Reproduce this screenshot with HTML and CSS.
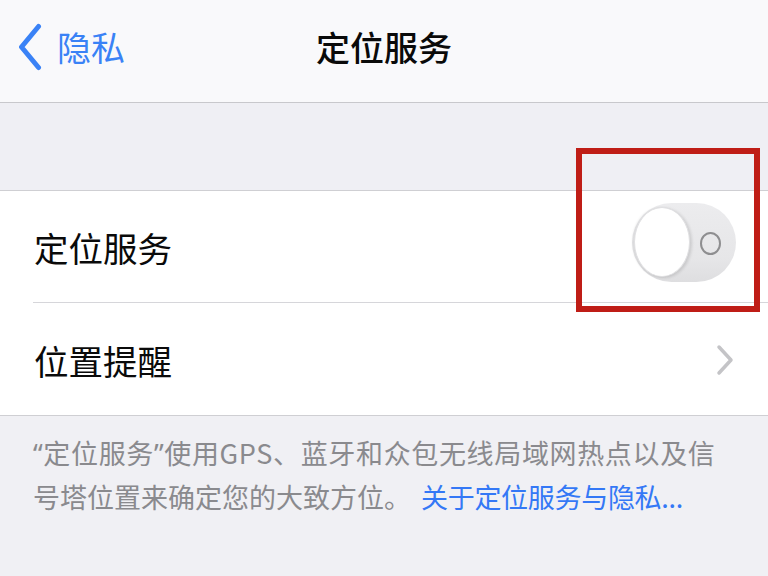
FILE: index.html
```html
<!DOCTYPE html>
<html lang="zh-CN">
<head>
<meta charset="utf-8">
<title>定位服务</title>
<link rel="stylesheet" href="styles.css">
</head>
<body>
<div class="screen">
  <header class="nav">
    <div class="nav-back">
      <svg class="back-chevron" width="26" height="48" viewBox="0 0 26 48"><polyline points="21.5,3.5 4.5,24 21.5,44.5" fill="none" stroke="#3a82f6" stroke-width="5" stroke-linecap="round" stroke-linejoin="round"/></svg>
      <span class="back-label">隐私</span>
    </div>
    <h1 class="nav-title">定位服务</h1>
    <div class="nav-spacer"></div>
  </header>
  <div class="gap"></div>
  <section class="group">
    <div class="row">
      <span class="row-label">定位服务</span>
      <div class="toggle">
        <div class="toggle-ring"></div>
        <div class="toggle-knob"></div>
      </div>
    </div>
    <div class="row row-last">
      <span class="row-label">位置提醒</span>
      <svg class="row-chevron" width="18" height="32" viewBox="0 0 18 32"><polyline points="3,3 15,16 3,29" fill="none" stroke="#c4c4c7" stroke-width="3.5" stroke-linecap="round" stroke-linejoin="round"/></svg>
    </div>
  </section>
  <div class="footer">
    <div class="footer-line footer-first"><span class="q">“</span>定位服务<span class="q">”</span>使用GPS、蓝牙和众包无线局域网热点以及信</div>
    <div class="footer-line footer-second"><span>号塔位置来确定您的大致方位。</span><span class="link">关于定位服务与隐私...</span></div>
  </div>
  <div class="highlight"></div>
</div>
</body>
</html>
```
FILE: styles.css
```css
* { box-sizing: border-box; }
html, body {
  margin: 0;
  padding: 0;
  background: #efeff4;
}
body {
  font-family: "Noto Sans CJK SC", "Noto Sans", sans-serif;
}
.screen {
  position: relative;
  width: 768px;
  height: 576px;
  overflow: hidden;
  background: #f0f0f4;
}
.nav {
  height: 103px;
  background: #f9f9fb;
  border-bottom: 1px solid #c8c8cc;
  display: grid;
  grid-template-columns: 1fr auto 1fr;
  align-items: center;
  padding-bottom: 9px;
}
.nav-back {
  display: flex;
  align-items: center;
  padding-left: 17px;
  gap: 14px;
}
.back-label {
  font-size: 34px;
  line-height: 1;
  color: #3a82f6;
}
.nav-title {
  margin: 0;
  font-size: 34px;
  font-weight: 500;
  line-height: 1;
  color: #0a0a0a;
}
.gap {
  height: 87px;
  background: #efeff4;
}
.group {
  background: #fff;
  border-top: 1px solid #cfcfd3;
  border-bottom: 1px solid #cfcfd3;
}
.row {
  height: 112px;
  display: flex;
  align-items: center;
  justify-content: space-between;
  margin-left: 33px;
  padding-right: 32px;
  border-bottom: 1px solid #d6d6da;
}
.row-last {
  border-bottom: none;
  padding-right: 34px;
}
.row-label {
  font-size: 34.5px;
  line-height: 1;
  color: #0a0a0a;
  padding-top: 2px;
  padding-left: 1px;
}
.row-chevron {
  margin-top: 2px;
}
.toggle {
  position: relative;
  width: 104px;
  height: 79px;
  border-radius: 40px / 40px;
  background: linear-gradient(180deg, #ececee 0%, #e6e6e8 70%, #dedee0 100%);
  margin-top: -8px;
}
.toggle-knob {
  position: absolute;
  left: 2px;
  top: 4px;
  width: 56px;
  height: 70px;
  border-radius: 50%;
  background: #fff;
  border: 1px solid #e0e0e2;
  box-shadow: -2px 0 2px rgba(0,0,0,0.06), 2px 1px 3px rgba(0,0,0,0.12);
}
.toggle-ring {
  position: absolute;
  left: 68px;
  top: 29px;
  width: 21px;
  height: 23px;
  border-radius: 50%;
  border: 2px solid #8e8e90;
}
.footer {
  padding: 15px 20px 0 33px;
  font-size: 27px;
  line-height: 43px;
  color: #8a8a8e;
}
.footer-line {
  white-space: nowrap;
}
.footer-first {
  letter-spacing: 0.65px;
}
.footer-second {
  display: flex;
  gap: 10px;
}
.q {
  font-family: "Noto Sans", sans-serif;
}
.link {
  color: #3478f6;
  letter-spacing: -0.3px;
}
.highlight {
  position: absolute;
  left: 576px;
  top: 148px;
  width: 184px;
  height: 164px;
  border: 6px solid #bf1d16;
}
```
